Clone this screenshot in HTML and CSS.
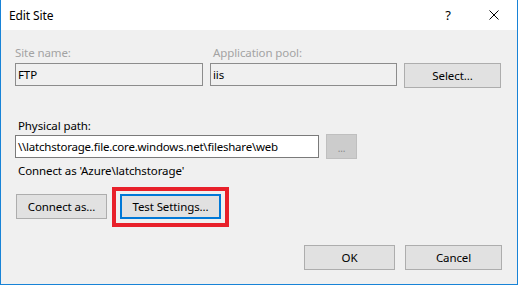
FILE: index.html
```html
<!DOCTYPE html>
<html>
<head>
<meta charset="utf-8">
<link rel="stylesheet" href="styles.css">
</head>
<body>
<div class="window">
  <div class="titlebar">
    <span class="title">Edit Site</span>
    <span class="caption-btn help">?</span>
    <span class="caption-btn close"><svg width="10" height="10" viewBox="0 0 10 10"><path d="M0.5 0.5 L9.5 9.5 M9.5 0.5 L0.5 9.5" stroke="#000" stroke-width="1" fill="none"/></svg></span>
  </div>
  <div class="content">
    <div class="row-site">
      <div class="field f-site">
        <div class="label disabled">Site name:</div>
        <div class="textbox disabled-box">FTP</div>
      </div>
      <div class="field f-pool">
        <div class="label disabled">Application pool:</div>
        <div class="textbox disabled-box">iis</div>
      </div>
      <button class="btn btn-select">Select...</button>
    </div>
    <div class="label path-label">Physical path:</div>
    <div class="row-path">
      <div class="textbox path-box">\\latchstorage.file.core.windows.net\fileshare\web</div>
      <button class="btn btn-browse"><span class="dots">...</span></button>
    </div>
    <div class="connect-text">Connect as 'Azure\latchstorage'</div>
    <div class="row-actions">
      <button class="btn btn-connect">Connect as...</button>
      <div class="highlight">
        <button class="btn btn-test">Test Settings...</button>
      </div>
    </div>
    <div class="row-footer">
      <button class="btn btn-ok">OK</button>
      <button class="btn btn-cancel">Cancel</button>
    </div>
  </div>
</div>
</body>
</html>
```

FILE: styles.css
```css
* { box-sizing: border-box; }
html, body { margin: 0; padding: 0; background: #ffffff; }
body {
  width: 519px;
  height: 287px;
  font-family: "Noto Sans", "Open Sans", sans-serif;
  font-size: 11.5px;
  letter-spacing: -0.1px;
  color: #000;
  overflow: hidden;
}
.window {
  width: 518px;
  height: 285px;
  border-left: 1px solid #1883d7;
  border-right: 1px solid #1883d7;
  border-bottom: 1px solid #1883d7;
  display: flex;
  flex-direction: column;
}
.titlebar {
  height: 30px;
  background: #fff;
  display: flex;
  align-items: center;
}
.title {
  padding-left: 8px;
  flex: 1;
  line-height: 15px;
  font-size: 12px;
}
.caption-btn {
  width: 46px;
  height: 30px;
  display: flex;
  align-items: center;
  justify-content: center;
}
.help { font-size: 13px; margin-top: -1px; }
.close svg { display: block; }
.content {
  flex: 1;
  background: #f0f0f0;
  padding: 15px 15px 0 14px;
  display: flex;
  flex-direction: column;
}
.label { line-height: 15px; height: 15px; }
.disabled { color: #a3a3a3; }
.row-site {
  display: flex;
  align-items: flex-end;
  gap: 7px;
}
.field { display: flex; flex-direction: column; gap: 3px; }
.f-site { width: 188px; }
.f-pool { width: 187px; }
.f-pool .label { padding-left: 3px; }
.textbox {
  height: 23px;
  padding: 0 2px;
  line-height: 21px;
  white-space: nowrap;
  overflow: hidden;
}
.disabled-box {
  border: 1px solid #8c8c8c;
  background: #f0f0f0;
}
.btn {
  font-family: inherit;
  font-size: 11.5px;
  letter-spacing: -0.1px;
  color: #000;
  background: #e1e1e1;
  border: 1px solid #adadad;
  height: 25px;
  padding: 0;
  margin: 0;
  line-height: 23px;
  text-align: center;
}
.btn-select { width: 97px; margin-bottom: -2px; }
.path-label { margin-top: 32px; padding-left: 3px; }
.row-path {
  display: flex;
  align-items: center;
  gap: 7px;
  margin-top: 1px;
}
.path-box {
  width: 304px;
  background: #fff;
  border: 1px solid #7a7a7a;
  letter-spacing: -0.22px;
}
.btn-browse {
  width: 31px;
  background: #cccccc;
  border-color: #bfbfbf;
  color: #8a8a8a;
  font-size: 10px;
}
.dots { position: relative; top: 2px; }
.connect-text {
  margin-top: 4px;
  padding-left: 3px;
  line-height: 15px;
}
.row-actions {
  display: flex;
  margin-top: 16px;
  padding-left: 1px;
  gap: 13px;
}
.btn-connect { width: 91px; }
.highlight { position: relative; }
.highlight::after {
  content: "";
  position: absolute;
  top: -7px;
  left: -8px;
  right: -8px;
  bottom: -8px;
  border: 4px solid #e8202a;
  pointer-events: none;
}
.btn-test {
  width: 101px;
  border: 2px solid #0078d7;
  line-height: 21px;
}
.row-footer {
  display: flex;
  justify-content: flex-end;
  gap: 10px;
  margin-top: 26px;
}
.btn-ok { width: 91px; }
.btn-cancel { width: 97px; }
```
